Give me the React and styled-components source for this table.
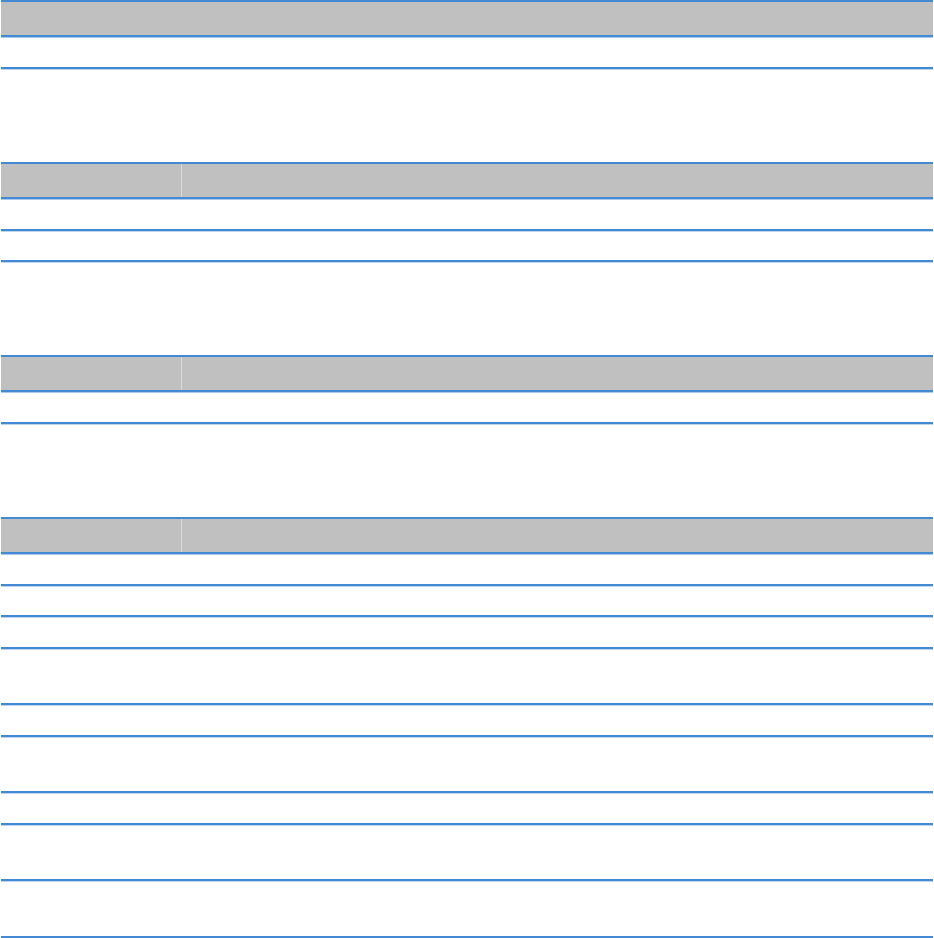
import React from 'react';
import styled, { createGlobalStyle } from 'styled-components';

const GlobalStyle = createGlobalStyle`
  html, body {
    margin: 0;
    padding: 0;
    background: #FFFFFF;
    font-family: "Liberation Sans", Arial, sans-serif;
  }
`;

const Page = styled.main`
  display: flex;
  flex-flow: column;
  gap: 93px;
  width: 932px;
  padding-left: 1px;
`;

const Table = styled.section`
  display: flex;
  flex-flow: column;
`;

const HeaderRow = styled.header`
  display: flex;
  height: 33px;
  background-color: #C0C0C0;
  border-top: 2px solid #4389D3;
  border-bottom: 2px solid #4389D3;
  box-shadow: 0 1px 0 rgba(67, 137, 211, .45);
`;

const HeaderCell = styled.div`
  flex: ${props => props.$width ? `0 0 ${props.$width}px` : `1`};
  border-right: ${props => props.$width ? `1px solid #DADADA` : `none`};
`;

const Row = styled.div`
  display: flex;
  height: ${props => props.$height}px;
  border-bottom: 2px solid #4389D3;
  box-shadow: 0 1px 0 rgba(67, 137, 211, .35);
`;

const Cell = styled.div`
  flex: ${props => props.$width ? `0 0 ${props.$width}px` : `1`};
`;

const DataTable = ({ columns, rows }) => (
  <Table>
    <HeaderRow>
      {columns === 2 && <HeaderCell $width={180} />}
      <HeaderCell />
    </HeaderRow>
    {rows.map((height, i) => (
      <Row key={i} $height={height}>
        {columns === 2 && <Cell $width={181} />}
        <Cell />
      </Row>
    ))}
  </Table>
);

// row heights: one line ~30px, two lines ~54px
const tables = [
  { columns: 1, rows: [30] },
  { columns: 2, rows: [30, 29] },
  { columns: 2, rows: [30] },
  { columns: 2, rows: [30, 29, 30, 54, 30, 54, 30, 54, 55] },
];

const App = () => (
  <>
    <GlobalStyle />
    <Page>
      {tables.map((t, i) => (
        <DataTable key={i} columns={t.columns} rows={t.rows} />
      ))}
    </Page>
  </>
);

export default App;
